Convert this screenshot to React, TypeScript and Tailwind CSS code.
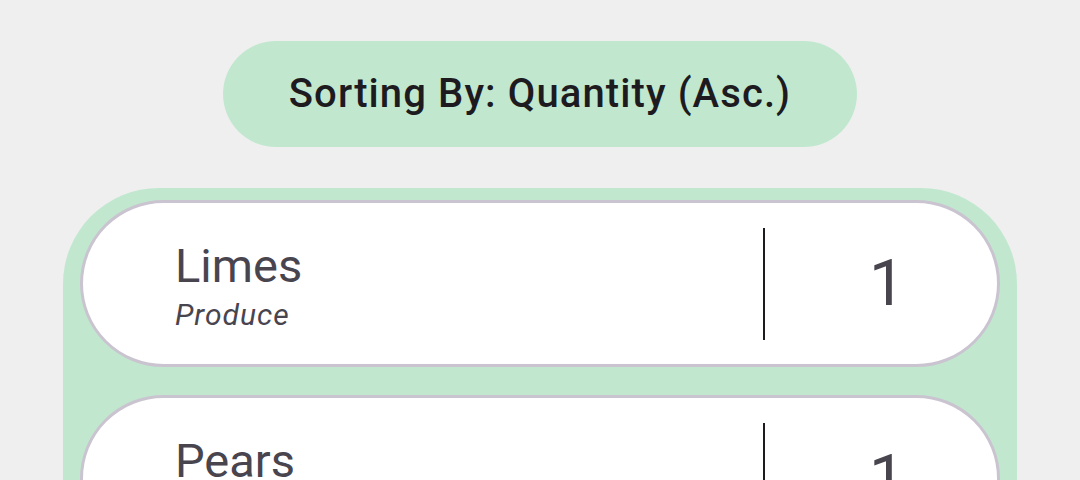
import React from 'react';

interface Item {
  name: string;
  category: string;
  quantity: number;
}

const items: Item[] = [
  { name: 'Limes', category: 'Produce', quantity: 1 },
  { name: 'Pears', category: 'Produce', quantity: 1 },
];

function ItemRow({ item }: { item: Item }) {
  return (
    <div className="h-[167px] shrink-0 bg-white border-[3px] border-[#cac4d0] rounded-full flex items-center">
      {/* Name + category */}
      <div className="w-[680px] shrink-0 pl-[92px] pt-[6px] flex flex-col text-[#49454f]">
        <span className="text-[47px] leading-[56px]">{item.name}</span>
        <span className="text-[30px] leading-[40px] italic tracking-[1px] mt-[1px]">{item.category}</span>
      </div>

      <div className="w-[2px] h-[112px] bg-[#1d1b20]" />

      {/* Quantity */}
      <div className="flex-1 flex justify-center pl-[12px] text-[64px] leading-none text-[#49454f]">
        {item.quantity}
      </div>
    </div>
  );
}

export default function App() {
  return (
    <div
      className="w-[1080px] h-[480px] overflow-hidden bg-[#efefef] flex flex-col items-center pt-[41px]"
      style={{ fontFamily: 'Roboto, "Noto Sans", sans-serif' }}
    >
      <div className="h-[106px] shrink-0 px-[66px] rounded-full bg-[#c1e8cf] flex items-center">
        <span className="text-[40px] tracking-[1.1px] font-medium text-[#1d1b20]">Sorting By: Quantity (Asc.)</span>
      </div>

      <div className="mt-[41px] w-[954px] shrink-0 bg-[#c1e8cf] rounded-[96px] pt-[12px] px-[17px] pb-[12px] flex flex-col gap-[28px]">
        {items.map((item) => (
          <ItemRow key={item.name} item={item} />
        ))}
      </div>
    </div>
  );
}
